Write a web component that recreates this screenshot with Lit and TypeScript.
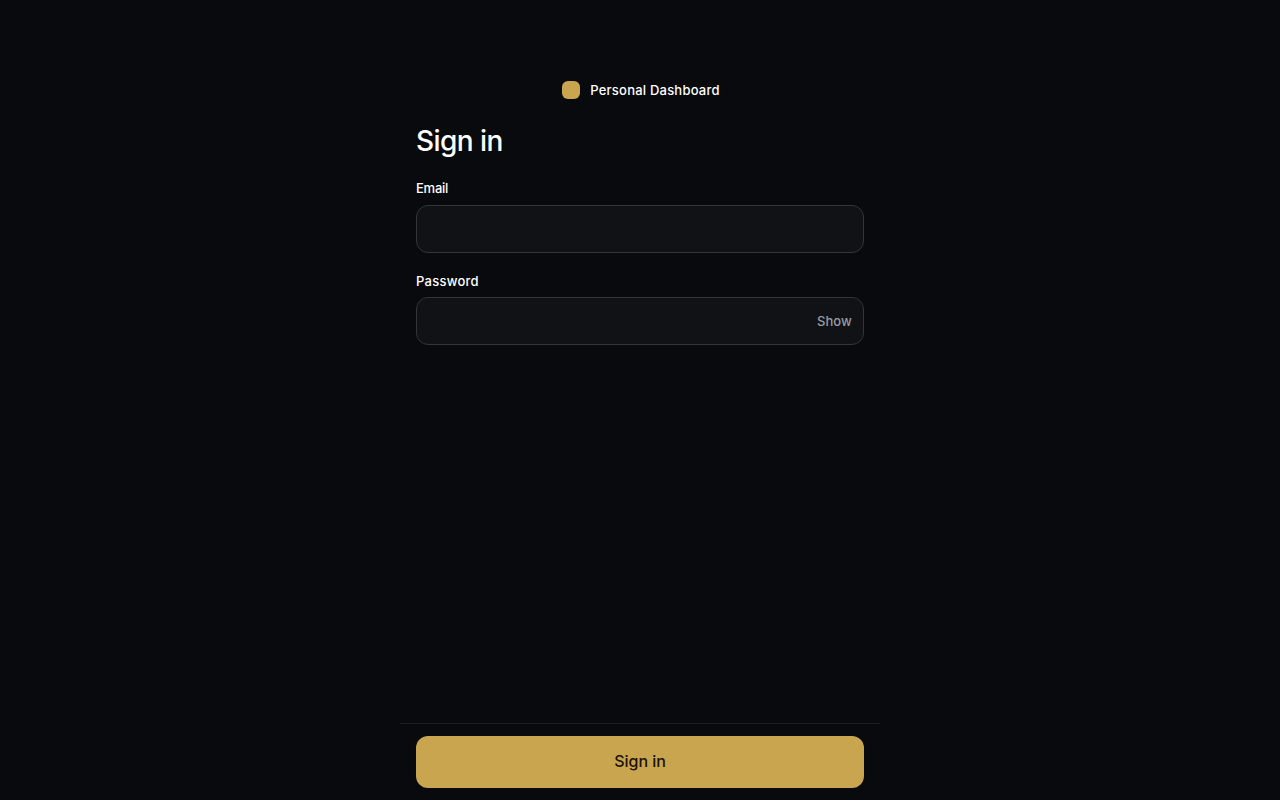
import { LitElement, html, css } from "lit";
import { customElement } from "lit/decorators.js";

@customElement("app-root")
export class AppRoot extends LitElement {
  static styles = css`
    :host {
      display: block;
      height: 800px;
      background: #090a0d;
      color: #fff;
      font-family: "Inter", "Noto Sans", sans-serif;
    }
    .shell {
      width: 480px;
      height: 800px;
      margin: 0 auto;
      display: flex;
      flex-direction: column;
      box-sizing: border-box;
    }
    .main {
      flex: 1;
      padding: 81px 16px 0;
      display: flex;
      flex-direction: column;
    }
    .brand {
      display: flex;
      justify-content: center;
      align-items: center;
      gap: 10px;
      padding-left: 2px;
      font-size: 13px;
      font-weight: 500;
      line-height: 18px;
      letter-spacing: 0.22px;
      color: #fff;
    }
    .mark {
      width: 18px;
      height: 18px;
      border-radius: 6px;
      background: #c8a54e;
    }
    h1 {
      margin: 22px 0 0;
      font-size: 28px;
      line-height: 40px;
      font-weight: 500;
      letter-spacing: -0.56px;
    }
    label {
      display: block;
      font-size: 13px;
      font-weight: 500;
      line-height: 18px;
      color: #fff;
    }
    .email { margin-top: 18px; }
    .email label { margin-bottom: 8px; letter-spacing: -0.25px; }
    .password { margin-top: 19px; }
    .password label { margin-bottom: 7px; letter-spacing: 0.25px; }
    .box {
      height: 48px;
      box-sizing: border-box;
      border: 1px solid #33353c;
      border-radius: 12px;
      background: #101216;
      display: flex;
      align-items: center;
      justify-content: flex-end;
      padding-right: 11px;
    }
    .show {
      font-size: 13px;
      font-weight: 500;
      color: #9a9ba1;
      letter-spacing: 0.1px;
    }
    .footer {
      border-top: 1px solid #1e1f24;
      padding: 12px 16px;
    }
    .cta {
      height: 52px;
      box-sizing: border-box;
      padding-bottom: 2px;
      border-radius: 12px;
      background: #c8a54e;
      color: #1a1206;
      display: flex;
      align-items: center;
      justify-content: center;
      font-size: 16px;
      font-weight: 500;
      letter-spacing: -0.05px;
    }
  `;

  render() {
    return html`
      <div class="shell">
        <div class="main">
          <div class="brand"><span class="mark"></span><span>Personal Dashboard</span></div>
          <h1>Sign in</h1>
          <div class="email">
            <label>Email</label>
            <div class="box"></div>
          </div>
          <div class="password">
            <label>Password</label>
            <div class="box"><span class="show">Show</span></div>
          </div>
        </div>
        <div class="footer"><div class="cta">Sign in</div></div>
      </div>
    `;
  }
}
